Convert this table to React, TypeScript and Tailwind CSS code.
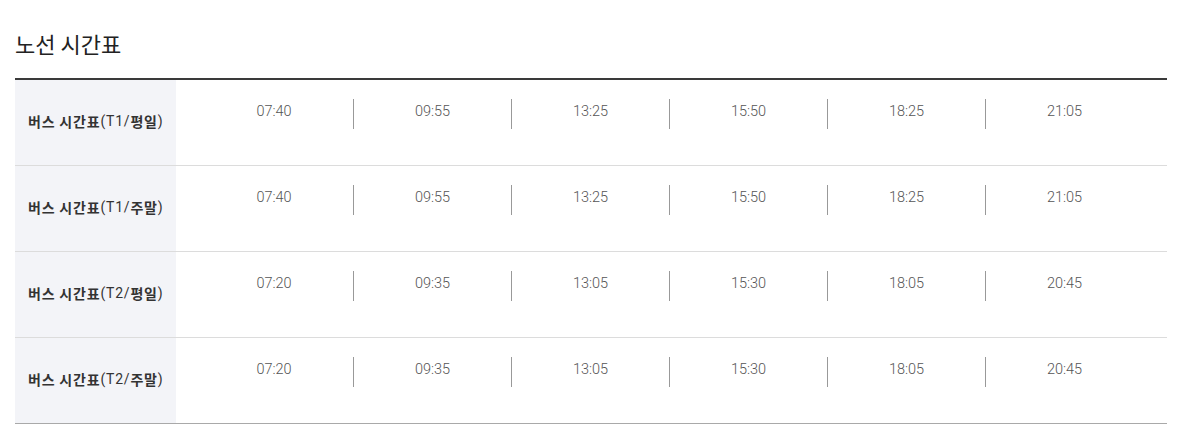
const ROWS = [
  { route: 'T1', day: '평일', times: ['07:40', '09:55', '13:25', '15:50', '18:25', '21:05'] },
  { route: 'T1', day: '주말', times: ['07:40', '09:55', '13:25', '15:50', '18:25', '21:05'] },
  { route: 'T2', day: '평일', times: ['07:20', '09:35', '13:05', '15:30', '18:05', '20:45'] },
  { route: 'T2', day: '주말', times: ['07:20', '09:35', '13:05', '15:30', '18:05', '20:45'] },
];

export default function App() {
  return (
    <div className="w-[1202px] h-[440px] bg-white px-[15px] pt-[28px] font-['Roboto','Noto_Sans_CJK_KR',sans-serif]">
      <h2 className="text-[22px] leading-[30px] font-normal text-[#222] font-['Noto_Sans_CJK_KR',sans-serif]">
        노선 시간표
      </h2>

      <div className="mt-[20px] w-[1152px] border-t-2 border-[#3a3a3a] border-b border-b-[#a9a9a9]">
        {ROWS.map((row, i) => (
          <div
            key={i}
            className={
              i < ROWS.length - 1
                ? 'flex h-[86px] border-b border-[#dcdcdc]'
                : 'flex h-[85px]'
            }
          >
            <div className="w-[161px] shrink-0 bg-[#f3f4f8] flex items-center pl-[13px] pb-[3px] text-[14px] tracking-[0.8px] text-[#333]">
              <span className="font-bold font-['Noto_Sans_CJK_KR',sans-serif]">버스 시간표</span>
              <span className="font-['Roboto',sans-serif]">({row.route}/</span>
              <span className="font-bold font-['Noto_Sans_CJK_KR',sans-serif]">{row.day}</span>
              <span className="font-['Roboto',sans-serif]">)</span>
            </div>
            <ul className="flex pl-[19px] pt-[19px]">
              {row.times.map((t, j) => (
                <li
                  key={j}
                  className={
                    j === 0
                      ? 'w-[158px] h-[30px] pt-[3px] text-center text-[14.5px] leading-[20px] text-[#555] font-light'
                      : 'w-[158px] h-[30px] pt-[3px] text-center text-[14.5px] leading-[20px] text-[#555] font-light border-l border-[#999]'
                  }
                >
                  {t}
                </li>
              ))}
            </ul>
          </div>
        ))}
      </div>
    </div>
  );
}
